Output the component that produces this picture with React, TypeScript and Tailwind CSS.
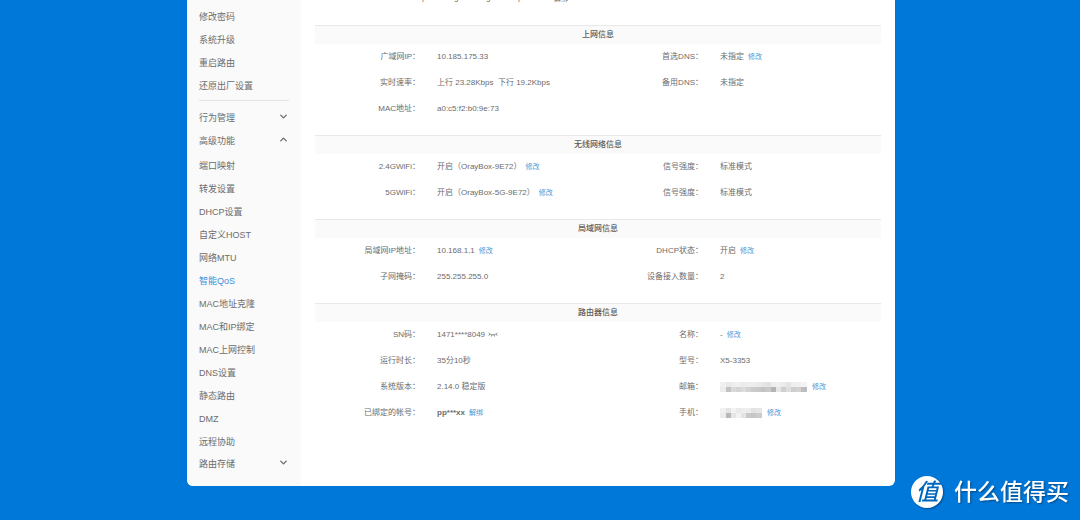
import type { ReactNode } from 'react'
import { ChevronDown, ChevronUp } from 'lucide-react'

type Field = {
  label: string
  value: ReactNode
  action?: string
}

type Section = {
  title: string
  left: Field[]
  right: Field[]
}

const SYSTEM_LINKS = ['修改密码', '系统升级', '重启路由', '还原出厂设置']

const ADVANCED_LINKS = [
  '端口映射',
  '转发设置',
  'DHCP设置',
  '自定义HOST',
  '网络MTU',
  '智能QoS',
  'MAC地址克隆',
  'MAC和IP绑定',
  'MAC上网控制',
  'DNS设置',
  '静态路由',
  'DMZ',
  '远程协助',
]

const ACTIVE_LINK = '智能QoS'

const EMAIL_CELLS = [
  ['#f0f0f0', '#e9e9e9', '#eeeeee', '#f0f0f0', '#ececec', '#eeeeee', '#ededed', '#eaeaea', '#e6e6e6', '#e2e2e2', '#eeeeee', '#f0f0f0', '#ebebeb', '#e4e4e4', '#eeeeee', '#f0f0f0', '#f4f4f4'],
  ['#ececec', '#c2c2c2', '#dadada', '#d4d4d4', '#dcdcdc', '#d2d2d2', '#cbcbcb', '#c9c9c9', '#c4c4c4', '#c9c9c9', '#b4b4b4', '#e6e6e6', '#cfcfcf', '#dedede', '#cecece', '#d2d2d2', '#bdbdbd'],
]

const PHONE_CELLS = [
  ['#f0f0f0', '#e4e4e4', '#f2f2f2', '#eaeaea', '#eeeeee', '#ededed', '#e2e2e2', '#e6e6e6'],
  ['#ececec', '#b9b9b9', '#e4e4e4', '#f2f2f2', '#e4e4e4', '#c9c9c9', '#c6c6c6', '#cccccc'],
]

function Mosaic({ rows, label }: { rows: string[][]; label: string }) {
  const width = rows[0].length * 5 + 3
  return (
    <svg width={width} height="10" viewBox={`0 0 ${width} 10`} role="img" aria-label={label}>
      {rows.map((row, y) =>
        row.map((fill, x) => (
          <rect key={`${x}-${y}`} x={x * 5 + (x > 0 ? 1 : 0)} y={y * 5} width="6" height="5" fill={fill} />
        )),
      )}
    </svg>
  )
}

function ClosedEye() {
  return (
    <svg width="10" height="6" viewBox="0 0 10 6" fill="none" stroke="#777" strokeWidth="0.8" strokeLinecap="round">
      <path d="M0.7 1 C2.6 3.6 7.4 3.6 9.3 1" />
      <path d="M1.8 2.2 L1 3.4 M3.8 3 L3.5 4.2 M6.2 3 L6.5 4.2 M8.2 2.2 L9 3.4" />
    </svg>
  )
}

const SECTIONS: Section[] = [
  {
    title: '上网信息',
    left: [
      { label: '广域网IP', value: '10.185.175.33' },
      { label: '实时速率', value: '上行 23.28Kbps\u00a0 下行 19.2Kbps' },
      { label: 'MAC地址', value: 'a0:c5:f2:b0:9e:73' },
    ],
    right: [
      { label: '首选DNS', value: '未指定', action: '修改' },
      { label: '备用DNS', value: '未指定' },
    ],
  },
  {
    title: '无线网络信息',
    left: [
      { label: '2.4GWiFi', value: '开启（OrayBox-9E72）', action: '修改' },
      { label: '5GWiFi', value: '开启（OrayBox-5G-9E72）', action: '修改' },
    ],
    right: [
      { label: '信号强度', value: '标准模式' },
      { label: '信号强度', value: '标准模式' },
    ],
  },
  {
    title: '局域网信息',
    left: [
      { label: '局域网IP地址', value: '10.168.1.1', action: '修改' },
      { label: '子网掩码', value: '255.255.255.0' },
    ],
    right: [
      { label: 'DHCP状态', value: '开启', action: '修改' },
      { label: '设备接入数量', value: '2' },
    ],
  },
  {
    title: '路由器信息',
    left: [
      {
        label: 'SN码',
        value: (
          <span className="flex items-center gap-[3px]">
            1471****8049
            <button type="button" aria-label="显示SN码">
              <ClosedEye />
            </button>
          </span>
        ),
      },
      { label: '运行时长', value: '35分10秒' },
      { label: '系统版本', value: '2.14.0 稳定版' },
      { label: '已绑定的帐号', value: <strong className="font-bold">pp***xx</strong>, action: '解绑' },
    ],
    right: [
      { label: '名称', value: '-', action: '修改' },
      { label: '型号', value: 'X5-3353' },
      { label: '邮箱', value: <Mosaic rows={EMAIL_CELLS} label="邮箱已隐藏" />, action: '修改' },
      { label: '手机', value: <Mosaic rows={PHONE_CELLS} label="手机已隐藏" />, action: '修改' },
    ],
  },
]

function NavLink({ text }: { text: string }) {
  const color = text === ACTIVE_LINK ? 'text-[#3a8ee0]' : 'text-[#6c6c6c]'
  return (
    <a href="#" className={`block h-[23px] leading-[23px] ${color}`}>
      {text}
    </a>
  )
}

function NavGroup({ text, open = false }: { text: string; open?: boolean }) {
  const Icon = open ? ChevronUp : ChevronDown
  return (
    <button
      type="button"
      aria-expanded={open}
      className="flex h-[23px] w-full justify-between leading-[23px] text-[#6c6c6c]"
    >
      {text}
      <Icon size={11} strokeWidth={3} className="mt-1" />
    </button>
  )
}

function Sidebar() {
  return (
    <nav className="w-[114px] shrink-0 bg-[#fafafa] pt-[6px] pr-3 pb-[10px] pl-3 text-[9px]">
      {SYSTEM_LINKS.map((text) => (
        <NavLink key={text} text={text} />
      ))}
      <hr className="mt-[2px] mb-[6px] border-[#e4e4e4]" />
      <NavGroup text="行为管理" />
      <NavGroup text="高级功能" open />
      <div className="mt-[2px] -mb-px">
        {ADVANCED_LINKS.map((text) => (
          <NavLink key={text} text={text} />
        ))}
      </div>
      <NavGroup text="路由存储" />
    </nav>
  )
}

function FieldList({ fields }: { fields: Field[] }) {
  return (
    <dl className="flex-1">
      {fields.map((field, i) => (
        <div key={i} className="flex h-[26px] items-center gap-[17px]">
          <dt className="w-[105px] shrink-0 text-right">{field.label}：</dt>
          <dd className="flex items-center gap-1 whitespace-nowrap">
            {field.value}
            {field.action && (
              <a href="#" className="text-[7px] text-[#4a97d6]">
                {field.action}
              </a>
            )}
          </dd>
        </div>
      ))}
    </dl>
  )
}

function InfoSection({ section }: { section: Section }) {
  return (
    <section className="mb-[13px]">
      <h2 className="h-[19px] border-t border-[#e9e9e9] bg-[#fafafa] text-center font-medium leading-[18px] text-[#5a5a5a]">
        {section.title}
      </h2>
      <div className="flex">
        <FieldList fields={section.left} />
        <FieldList fields={section.right} />
      </div>
    </section>
  )
}

// Last row of the block above, scrolled almost out of view
function ScrolledRow() {
  return (
    <div aria-hidden="true" className="mb-[22px] flex h-[3px] items-end overflow-hidden pl-[107px] leading-[10px]">
      <span className="w-8">p</span>
      <span className="w-8">g</span>
      <span className="w-8">g</span>
      <span className="w-8">p</span>
      <span className="pl-1 text-[7px] leading-[8px]">解绑</span>
    </div>
  )
}

function Watermark() {
  return (
    <div className="fixed right-[11px] bottom-3 flex items-center gap-[11px] text-white">
      <span className="flex size-8 items-center justify-center rounded-full bg-white text-[23px] font-medium italic leading-none text-[#0067bd] shadow-[1px_1px_2px_rgba(0,0,0,0.35)]">
        值
      </span>
      <span className="text-[23px] font-medium leading-[30px] [text-shadow:1px_1px_2px_rgba(0,0,0,0.4)]">
        什么值得买
      </span>
    </div>
  )
}

export default function App() {
  return (
    <div
      lang="zh-CN"
      className="min-h-screen bg-[#0078da] pb-[34px] pl-0.5 font-['Liberation_Sans','Noto_Sans_CJK_SC',sans-serif] text-[8px] text-[#6c6c6c]"
    >
      <div className="mx-auto flex max-w-[708px] overflow-hidden rounded-b-md bg-white">
        <Sidebar />
        <main className="min-w-0 flex-1 px-[14px]">
          <ScrolledRow />
          {SECTIONS.map((section) => (
            <InfoSection key={section.title} section={section} />
          ))}
        </main>
      </div>
      <Watermark />
    </div>
  )
}
